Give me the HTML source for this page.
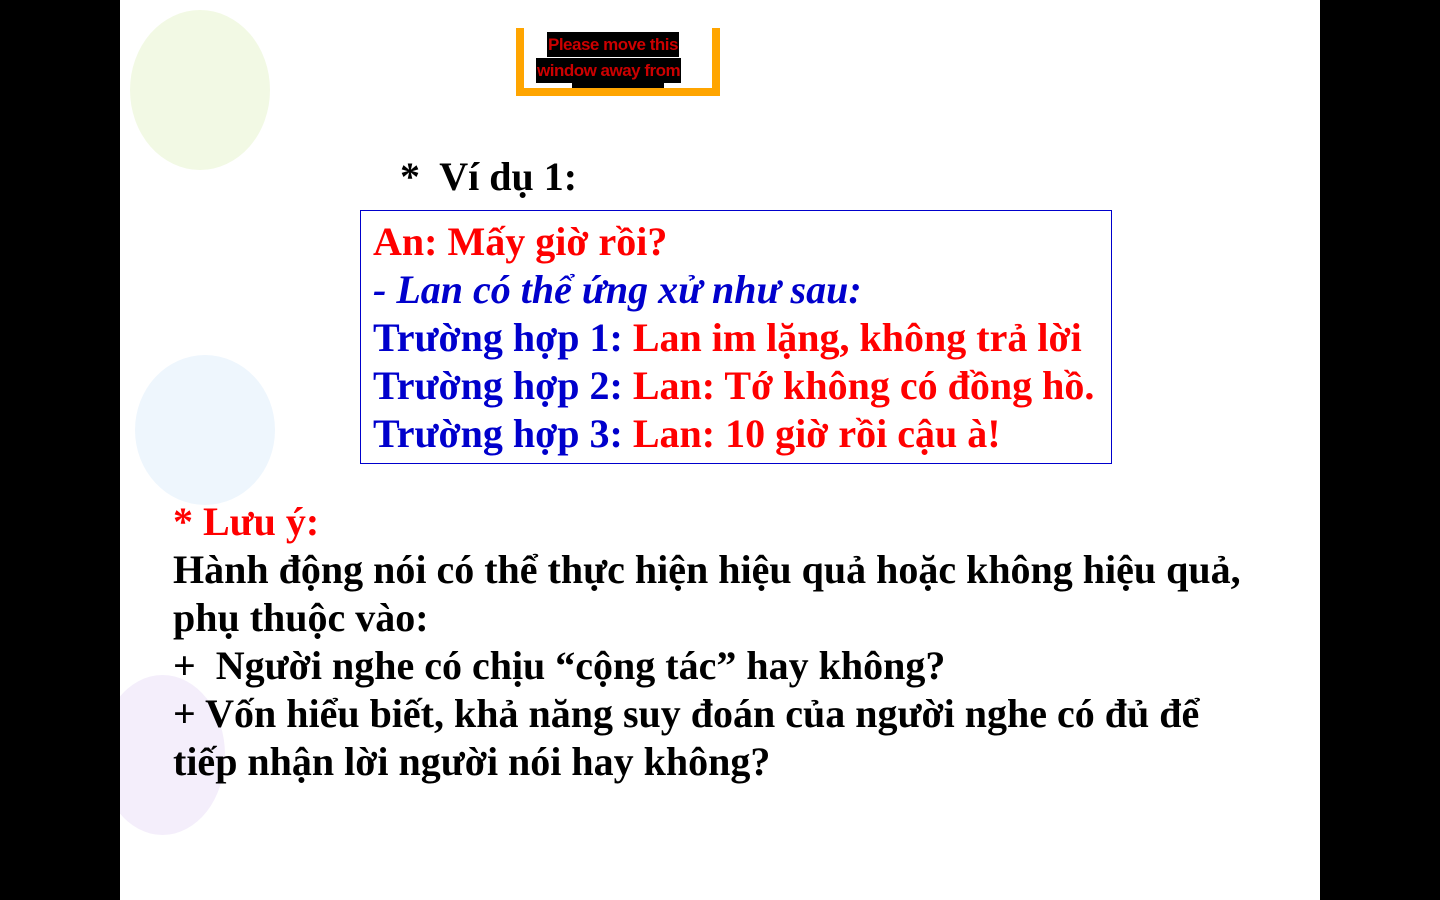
<!DOCTYPE html>
<html><head><meta charset="utf-8"><style>
html,body{margin:0;padding:0;width:1440px;height:900px;overflow:hidden;background:#000}
#s{position:absolute;left:120px;top:0;width:1200px;height:900px;background:#fff;overflow:hidden}
.t{position:absolute;font-family:"Liberation Serif",serif;font-weight:bold;font-size:40px;line-height:48px;white-space:nowrap;color:#000}
.r{color:#f00}.b{color:#00c}
.bal{position:absolute;border-radius:50%}
</style></head><body>
<div id="s">
<div class="bal" style="left:10px;top:10px;width:140px;height:160px;background:#f2f9e4"></div>
<div class="bal" style="left:15px;top:355px;width:140px;height:150px;background:#eef6fd"></div>
<div class="bal" style="left:-20px;top:675px;width:125px;height:160px;background:#f4eefb"></div>
<div style="position:absolute;left:396px;top:28px;width:188px;height:60px;border:8px solid #ffa500;border-top:none;background:#fff"></div>
<div style="position:absolute;left:427px;top:32px;background:#000;color:#c00;font:bold 17px 'Liberation Sans',sans-serif;line-height:25px;padding:0 1px;letter-spacing:-0.5px">Please move this</div>
<div style="position:absolute;left:416px;top:58px;background:#000;color:#c00;font:bold 17px 'Liberation Sans',sans-serif;line-height:25px;padding:0 1px;letter-spacing:-0.5px">window away from</div>
<div style="position:absolute;left:452px;top:83px;width:92px;height:5px;background:#000"></div>
<div class="t" style="left:280px;top:153px">*&nbsp; Ví dụ 1:</div>
<div style="position:absolute;left:240px;top:210px;width:750px;height:252px;border:1px solid #00c"></div>
<div class="t r" style="left:253px;top:218px">An: Mấy giờ rồi?</div>
<div class="t b" style="left:253px;top:266px;font-style:italic">- Lan có thể ứng xử như sau:</div>
<div class="t b" style="left:253px;top:314px">Trường hợp 1: <span class="r">Lan im lặng, không trả lời</span></div>
<div class="t b" style="left:253px;top:362px">Trường hợp 2: <span class="r">Lan: Tớ không có đồng hồ.</span></div>
<div class="t b" style="left:253px;top:410px">Trường hợp 3: <span class="r">Lan: 10 giờ rồi cậu à!</span></div>
<div class="t r" style="left:53px;top:498px">* Lưu ý:</div>
<div class="t" style="left:53px;top:546px">Hành động nói có thể thực hiện hiệu quả hoặc không hiệu quả,</div>
<div class="t" style="left:53px;top:594px">phụ thuộc vào:</div>
<div class="t" style="left:53px;top:642px">+&nbsp; Người nghe có chịu “cộng tác” hay không?</div>
<div class="t" style="left:53px;top:690px">+ Vốn hiểu biết, khả năng suy đoán của người nghe có đủ để</div>
<div class="t" style="left:53px;top:738px">tiếp nhận lời người nói hay không?</div>
</div>
</body></html>
